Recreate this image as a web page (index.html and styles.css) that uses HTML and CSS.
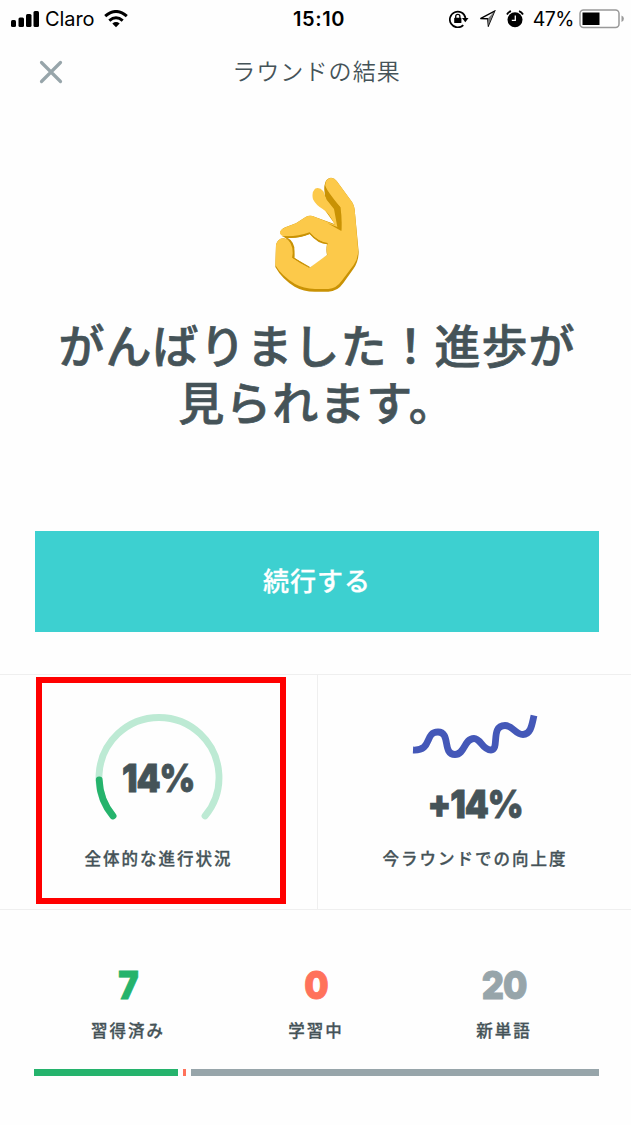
FILE: index.html
```html
<!DOCTYPE html>
<html lang="ja">
<head>
<meta charset="utf-8">
<title>ラウンドの結果</title>
<link rel="stylesheet" href="styles.css">
</head>
<body>
<main class="screen">
  <header class="status">
    <div class="carrier">
      <svg width="30" height="18" viewBox="0 0 30 18"><rect x="1" y="10" width="5" height="7" rx="1.5"/><rect x="8.5" y="7.5" width="5.5" height="9.5" rx="1.5"/><rect x="16" y="4" width="5.5" height="13" rx="1.5"/><rect x="23.5" y="1" width="5.5" height="16" rx="1.5"/></svg>
      <span class="carrier-name">Claro</span>
      <svg class="wifi" width="24" height="18" viewBox="0 0 24 18"><path d="M1.2 6.2Q12-3.2 22.8 6.2M5.3 10.6Q12 4.8 18.7 10.6" fill="none" stroke="#000" stroke-width="3"/><path d="M8.3 13.5Q12 10.7 15.7 13.5L12 17.3Z"/></svg>
    </div>
    <time class="clock">15:10</time>
    <div class="indicators">
      <svg class="lock" width="20" height="18" viewBox="0 0 20 18"><path d="M14.3 15.1A7.9 7.9 0 1 1 16.5 8" fill="none" stroke="#000" stroke-width="1.7"/><path d="M13 8h6.5l-3.2 4.3z"/><rect x="5.2" y="7.8" width="7.2" height="5.2" rx=".6"/><path d="M6.7 8V6.5a2.1 2.1 0 0 1 4.2 0V8" fill="none" stroke="#000" stroke-width="1.3"/></svg>
      <svg class="arrow" width="17" height="17" viewBox="0 0 17 17"><path d="M1.4 8.6L15.5 1.2L9.4 15.5L8.7 8.7Z" fill="none" stroke="#000" stroke-width="1.4"/><path d="M8.7 8.7L15.5 1.2L9.4 15.5Z" fill="#777"/></svg>
      <svg class="alarm" width="18" height="18" viewBox="0 0 18 18"><circle cx="9" cy="9.7" r="7.5"/><path d="M1 4.5Q2.2 2 5 1.1M17 4.5Q15.8 2 13 1.1" fill="none" stroke="#000" stroke-width="1.8"/><path d="M9.3 5.6v4.8H5.8" fill="none" stroke="#fff" stroke-width="1.3"/></svg>
      <span class="charge">47%</span>
      <svg class="battery" width="47" height="20" viewBox="0 0 47 20"><rect x="1" y="1" width="39" height="17.5" rx="3.5" fill="#fff" stroke="#999" stroke-width="1.5"/><rect x="3.5" y="3.5" width="17" height="12.5"/><path d="M42.5 6.5q2.4 1 2.4 3.2t-2.4 3.2z" fill="#999"/></svg>
    </div>
  </header>
  <nav class="nav">
    <svg class="close" width="24" height="24" viewBox="0 0 24 24"><path d="M2.5 2.5L21.5 21.5M21.5 2.5L2.5 21.5" stroke="#97a5aa" stroke-width="3.2" stroke-linecap="round"/></svg>
    <h1 class="title">ラウンドの結果</h1>
  </nav>
  <section class="hero">
    <svg class="hand" width="115" height="140" viewBox="0 0 345 420">
      <path fill="#c99204" d="M194 60Q196 40 213 38Q224 39 230 48L276 111Q284 123 285 145L296 260Q296 290 280 312L250 354Q232 380 205 380H165Q130 380 104 365Q66 342 46 306L48 240Q50 228 62 221Q76 216 88 228L60 204Q62 193 76 187L108 175L137 156Q150 149 165 156L225 178L196 137Z"/>
      <path fill="#fcc94a" fill-rule="evenodd" d="M196 64Q194 42 213 38Q224 39 230 48L276 111Q284 123 285 145L294 250Q296 280 281 300L247 345Q229 371 205 372H165Q130 370 105 357Q66 334 46 301L48 240Q50 228 62 221Q77 216 91 232L99 247Q101 262 97 278Q122 296 149 309Q180 280 202 270Q198 250 202 237Q176 230 149 205Q113 218 76 214Q59 212 60 201Q63 192 77 187L108 175L137 156Q150 149 165 156L224 179Q209 145 188 132Q168 121 159 103Q154 82 165 71Q178 64 190 79Q199 107 225 131L234 151L244 198Q247 160 241 127Q203 81 196 64Z"/>
      <path fill="#fff" d="M149 207Q174 232 201 238Q197 254 201 270L149 308L103 278Q105 247 95 234Q88 223 78 218Q113 222 149 207Z"/>
      <path fill="#c99204" d="M65 213Q107 217 149 202Q174 231 203 234V238Q173 237 149 207Q113 221 76 218ZM74 217Q97 220 103 247V279L149 305V309L97 278Q103 233 74 217ZM194 60Q190 83 200 104L222 132L232 186L202 174L244 198L241 127Q203 91 194 60Z"/>
    </svg>
    <h2 class="headline">がんばりました！進歩が<br>見られます。</h2>
    <button class="continue">続行する</button>
  </section>
  <section class="stats">
    <div class="stat">
      <div class="gauge">
        <svg class="gauge-ring" width="128" height="110" viewBox="0 0 128 110"><path d="M18 103A60 60 0 1 1 110 103" fill="none" stroke="#bdead4" stroke-width="6.8" stroke-linecap="round"/><path d="M18 103A60 60 0 0 1 4.2 67" fill="none" stroke="#25b36c" stroke-width="6.8" stroke-linecap="round"/></svg>
        <span class="gauge-value number">14%</span>
      </div>
      <p class="label">全体的な進行状況</p>
      <div class="highlight"></div>
    </div>
    <div class="stat trend">
      <svg class="wave" width="126" height="45" viewBox="0 0 126 45"><path d="M1 36C21 37 12 18 26 18C39 18 30 40.5 43 40.5C53 40.5 52 24.5 62 24.5C69 24.5 70 36 79 36C88 36 78 11.5 93 11.5C101 11.5 103 20.5 111 20.5C119 20.5 120 10 122 1.5" fill="none" stroke="#4458b8" stroke-width="6.8"/></svg>
      <div class="number gain">+14%</div>
      <p class="label">今ラウンドでの向上度</p>
    </div>
  </section>
  <section class="counts">
    <div class="count learned"><div class="number">7</div><p class="label">習得済み</p></div>
    <div class="count learning"><div class="number">0</div><p class="label">学習中</p></div>
    <div class="count fresh"><div class="number">20</div><p class="label">新単語</p></div>
  </section>
  <div class="progress"><i class="bar-learned"></i><i class="bar-learning"></i><i class="bar-fresh"></i></div>
</main>
</body>
</html>
```
FILE: styles.css
```css
* { box-sizing: border-box; }
body, h1, h2, p { margin: 0; }
body { background: #fefefe; color: #455358; font-family: "Noto Sans CJK JP", sans-serif; }
.screen { width: 631px; height: 1125px; overflow: hidden; }
svg { display: block; flex: none; }
.status { display: grid; grid-template-columns: 1fr auto 1fr; align-items: center; height: 37px; padding: 0 7px 0 10px; color: #000; font: 20px/24px Inter, sans-serif; }
.carrier, .indicators { display: flex; align-items: center; }
.carrier-name { margin-left: 5px; font-size: 20px; letter-spacing: -.1px; }
.wifi { margin-left: 10px; }
.clock { margin-left: 4px; font-size: 20px; font-weight: 600; letter-spacing: .6px; }
.indicators { justify-content: flex-end; }
.arrow { margin-left: 10px; }
.alarm { margin-left: 10px; }
.charge { margin-left: 9px; font-size: 19.5px; letter-spacing: -.5px; }
.battery { margin: 0 -2px 0 5px; }
.nav { display: grid; grid-template-columns: 24px 1fr 24px; align-items: center; height: 70px; padding: 0 39px; }
.title { padding: 0 0 4px 2px; text-align: center; font-size: 23px; line-height: 34px; font-weight: 350; letter-spacing: 1.1px; }
.hero { display: flex; flex-direction: column; align-items: center; height: 567px; padding: 58px 32px 0 35px; }
.headline { margin-top: 10px; text-align: center; font-size: 46px; line-height: 57px; font-weight: 500; letter-spacing: 1px; white-space: nowrap; -webkit-text-stroke: .7px #455358; }
.continue { width: 564px; height: 101px; margin-top: 102px; padding: 0 0 4px; border: 0; background: #3dd0d0; color: #fff; font: 500 26px/40px "Noto Sans CJK JP", sans-serif; letter-spacing: 1px; -webkit-text-stroke: .3px #fff; }
.stats { display: grid; grid-template-columns: 318px 1fr; height: 236px; border-top: 1px solid #efefef; border-bottom: 1px solid #efefef; }
.stat { position: relative; display: flex; flex-direction: column; align-items: center; padding-top: 38px; border-right: 1px solid #efefef; }
.stat.trend { border-right: 0; }
.number { font: 900 39px/40px Inter, sans-serif; letter-spacing: -1.2px; transform: scaleX(.88); -webkit-text-stroke: .8px currentColor; }
.label { font-size: 16.5px; line-height: 24px; font-weight: 500; letter-spacing: 2px; white-space: nowrap; -webkit-text-stroke: .3px currentColor; }
.gauge { display: grid; height: 110px; justify-items: center; align-items: center; }
.gauge-ring, .gauge-value { grid-area: 1 / 1; }
.gauge-value { margin-top: 20px; }
.stat .label { margin-top: 23px; }
.wave { margin-top: 1px; }
.gain { margin-top: 25px; }
.trend .label { margin-top: 22px; padding-left: 1px; }
.highlight { position: absolute; left: 36px; top: 2px; width: 250px; height: 227px; border: 6px solid #f00; }
.counts { display: grid; grid-template-columns: repeat(3, 188px); height: 159px; padding: 55px 0 0 34px; text-align: center; }
.count .label { margin-top: 13px; }
.learned .number { color: #25b36c; }
.learning .number { color: #ff725b; }
.fresh .number { color: #97a5aa; }
.progress { display: flex; height: 7px; padding: 0 32px 0 34px; }
.bar-learned { width: 144px; background: #25b36c; }
.bar-learning { width: 3px; margin: 0 5px; background: #ff725b; }
.bar-fresh { flex: 1; background: #97a5aa; }
```
